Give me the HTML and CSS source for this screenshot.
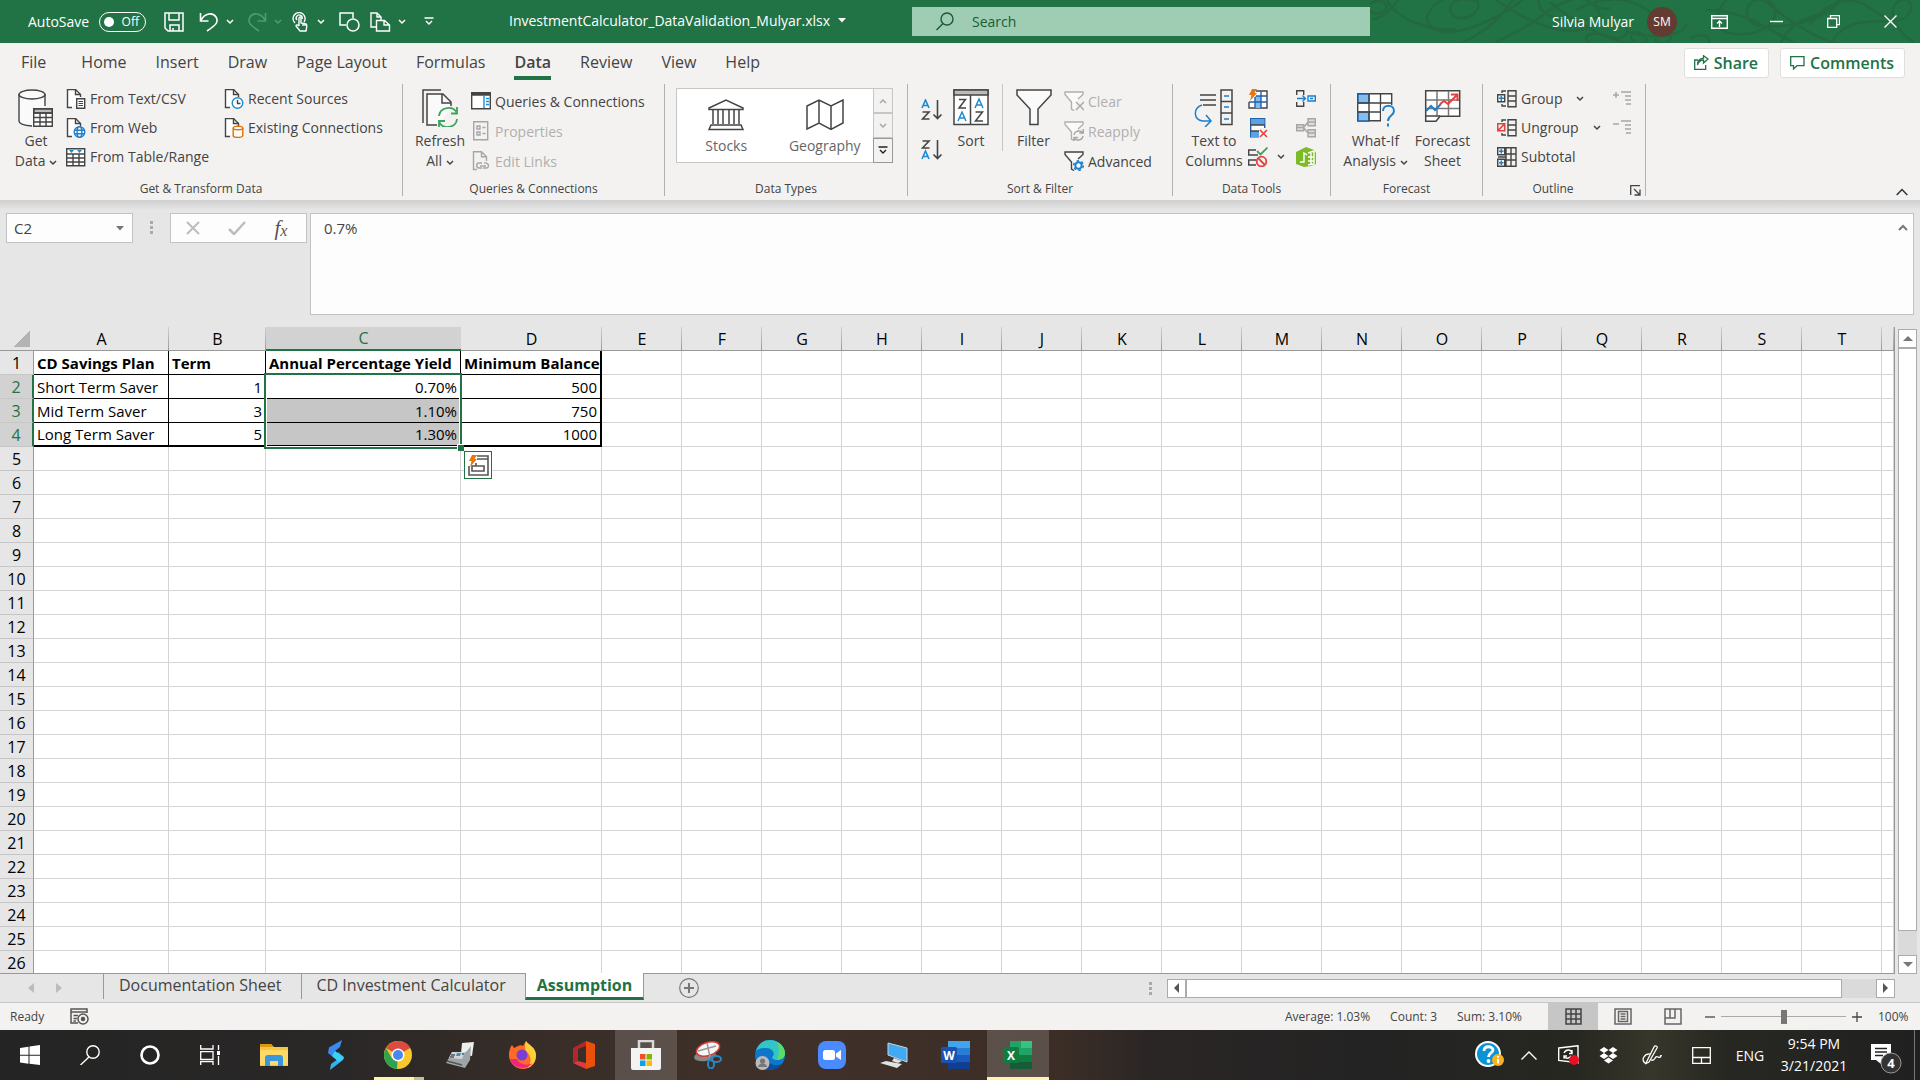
FILE: index.html
```html
<!DOCTYPE html>
<html lang="en">
<head>
  <meta charset="UTF-8" />
  <meta name="viewport" content="width=device-width, initial-scale=1.0"/>
  <title>InvestmentCalculator_DataValidation_Mulyar.xlsx</title>
  <link rel="stylesheet" href="styles.css">
</head>
<body>

  <!-- shared icon parts -->
  <svg class="defs" aria-hidden="true">
    <symbol id="chev" viewBox="0 0 8 6"><path d="M1 1l3 3 3-3" fill="none" stroke="currentColor" stroke-width="1.5"/></symbol>
    <symbol id="page" viewBox="0 0 20 20"><path d="M6 18.5H1.5v-18h8l5 5V8" fill="#fff" stroke="#444" stroke-width="1.4"/><path d="M9.5.5v5h5" fill="none" stroke="#444" stroke-width="1.4"/></symbol>
    <symbol id="funnel" viewBox="0 0 20 20"><path d="M10 19.5l-2.500-1.500v-7L1 3.500V1h18v2.500L14 8" fill="#fafafa" stroke="currentColor" stroke-width="1.4"/></symbol>
  </svg>

  <!-- TITLE BAR -->
  <header class="titlebar">
    <svg class="swirls" width="560" height="43" viewBox="0 0 560 43" fill="none" stroke="#24683f" stroke-width="2.500">
      <path d="M10 4c8-6 18-2 16 4s-12 8-16 2M26-2c8 20 40 32 70 32M12 20c16-4 20-14 30-24M118 2c-18-8-34 2-26 12s30 0 26-12-34-8-46 6 0 26 20 24 60-20 74-36M100 44c10-6 34-14 54-46M130-4c20 14 60 40 90 34s20-24 6-30-34 8-50 20-40 20-44 26M180-4c-10 24 40 30 60 20M190 2c16 14 60 44 100 44M240-2c-10 8 0 12 10 10M216 10c30-16 60-14 80 8"/>
      <path d="M230 44c-10-8 0-14 16-8s24-2 20-8M276 44c-10-8-2-16 6-10s4 12-2 8M306 44c10-8 2-16-6-10s-4 12 2 8M266 28c-2 10 60 12 60-4M330 38c14-6 22-2 18 8M370-4c-18 16-20 40 14 38s40-30 20-34-24 24-4 26 66-2 84-30M346 10c40 0 66 22 90 34M400-4c20 20 60 46 80 48M420 44c20-40 54-20 60-48M450 24c20-24 40-30 60-16s34 16 40 4-10-18-16-6 8 30 20 36M470 44c20-30 40-20 70-24"/>
    </svg>
    <div class="quick">
      <label class="autosave" for="autosave">AutoSave</label>
      <span class="toggle"><input type="checkbox" id="autosave"><span>Off</span></span>
      <button class="q-save" aria-label="Save"><svg width="20" height="20" fill="none" stroke="#fff" stroke-width="1.500"><path d="M1 1h18v18H4l-3-3zM5 1v7h10V1M6 19v-6h9v6M9 19v-3"/></svg></button>
      <button class="q-undo" aria-label="Undo"><svg width="20" height="20" fill="none" stroke="#fff" stroke-width="1.600"><path d="M1.500 1v8h8M2 8c4-7 12-8 15-3s0 8-9 14"/></svg></button>
      <button class="q-chev" aria-label="Undo list"><svg width="8" height="6"><use href="#chev"/></svg></button>
      <button class="q-redo" aria-label="Redo"><svg width="20" height="20" fill="none" stroke="#4f9b6d" stroke-width="1.600"><path d="M18.500 1v8h-8M18 8c-4-7-12-8-15-3s0 8 9 14"/></svg></button>
      <button class="q-chev dim" aria-label="Redo list"><svg width="8" height="6"><use href="#chev"/></svg></button>
      <button class="q-touch" aria-label="Touch mode"><svg width="18" height="20" fill="none" stroke="#fff" stroke-width="1.400"><path d="M3 11a6 6 0 1 1 9-1"/><path d="M5 8a3 3 0 1 1 5-1"/><path d="M7 14V6c0-1.500 2-1.500 2 0v5l5 1c1 0 1 2 0 7H8l-4-5c0-1 1-2 3 0M11 14v-3M13 14v-2"/></svg></button>
      <button class="q-chev" aria-label="Touch options"><svg width="8" height="6"><use href="#chev"/></svg></button>
      <button class="q-shapes" aria-label="Shapes"><svg width="21" height="20" fill="none" stroke="#fff" stroke-width="1.500"><path d="M7 13H1V1h13v5"/><circle cx="14" cy="13" r="6"/></svg></button>
      <button class="q-copy" aria-label="Paste special"><svg width="21" height="20" fill="none" stroke="#fff" stroke-width="1.400"><path d="M6 15H1V1h6l4 4v3M7 1v4h4M6.500 19V8.500h8l5 4.500v6zM14 9v4h5"/></svg></button>
      <button class="q-chev" aria-label="Paste options"><svg width="8" height="6"><use href="#chev"/></svg></button>
      <button class="q-more" aria-label="Customize toolbar"><svg width="10" height="9" fill="none" stroke="#fff" stroke-width="1.400"><path d="M.5 1h9M2 4l3 3 3-3"/></svg></button>
    </div>
    <button class="doc-name">InvestmentCalculator_DataValidation_Mulyar.xlsx <svg width="8" height="5"><path d="M0 0h8L4 4.500z" fill="#fff"/></svg></button>
    <div class="search">
      <svg width="18" height="19" fill="none" stroke="#185c37" stroke-width="1.400"><circle cx="11" cy="7" r="6"/><path d="M7 11.500L.5 18"/></svg>
      <input type="text" aria-label="Search" placeholder="Search">
    </div>
    <div class="window-side">
      <span>Silvia Mulyar</span>
      <span class="avatar">SM</span>
      <button aria-label="Ribbon display"><svg width="17" height="14" fill="none" stroke="#fff" stroke-width="1.400"><path d="M.7.7h15.600v12.600H.7zM1 3.500h15M8.500 12V6M6 8.500L8.500 6 11 8.500"/></svg></button>
      <button aria-label="Minimize"><svg width="13" height="13"><path d="M0 6.500h13" stroke="#fff" stroke-width="1.400"/></svg></button>
      <button aria-label="Restore"><svg width="13" height="13" fill="none" stroke="#fff" stroke-width="1.300"><path d="M.7 3.500h9v9h-9zM3.500 3.500V.7h9v9h-3"/></svg></button>
      <button aria-label="Close"><svg width="13" height="13"><path d="M.5.5l12 12M12.500.5l-12 12" stroke="#fff" stroke-width="1.400"/></svg></button>
    </div>
  </header>

  <!-- RIBBON TABS -->
  <nav class="tabs">
    <a href="#" class="file">File</a>
    <a href="#">Home</a>
    <a href="#">Insert</a>
    <a href="#">Draw</a>
    <a href="#">Page Layout</a>
    <a href="#">Formulas</a>
    <a href="#" class="active">Data</a>
    <a href="#">Review</a>
    <a href="#">View</a>
    <a href="#">Help</a>
    <div class="tab-actions">
      <button><svg width="15" height="15" fill="none" stroke="#217346" stroke-width="1.300"><path d="M4 5H.7v9.300h11V10M3.500 10c1-4 3-5 6-5V8l4.500-4L9.500.7v2.500C6 3.500 3.500 6 3.500 10z"/></svg>Share</button>
      <button><svg width="15" height="14" fill="none" stroke="#217346" stroke-width="1.300"><path d="M.7.7h13.300v9H7L3.500 13V9.700H.7z"/></svg>Comments</button>
    </div>
  </nav>

  <!-- RIBBON -->
  <section class="ribbon">
    <div class="group g-get">
      <div class="body">
        <button class="big">
          <svg width="36" height="38" fill="none" stroke="#444" stroke-width="1.400"><path d="M1 5v27c0 3 6 5 13 5h1V20h11V5" fill="#fafafa" stroke="none"/><path d="M1 5v27c0 2.500 5 4.500 13 5M27 5v12"/><ellipse cx="14" cy="5.500" rx="13" ry="4.500" fill="#fafafa"/><path d="M15.700 19.700h18.600v17.600H15.700z" fill="#fff"/><path d="M16 20h18v4H16z" fill="#bbb"/><path d="M15.700 24h18.600M15.700 28.500h18.600M15.700 33h18.600M22 24v13M28 24v13"/></svg>
          <span>Get<br>Data <svg width="8" height="6"><use href="#chev"/></svg></span>
        </button>
        <div class="list">
          <button><svg width="20" height="20"><use href="#page"/><path d="M10.700 9.700h8v9.600h-8z" fill="#fff" stroke="#444" stroke-width="1.400"/><path d="M12.500 12.500H17M12.500 14.500H17M12.500 16.500H17" stroke="#444"/></svg>From Text/CSV</button>
          <button><svg width="20" height="20"><use href="#page"/><g fill="#fff" stroke="#1e7fcb" stroke-width="1.400"><circle cx="13.500" cy="14" r="5.300"/><ellipse cx="13.500" cy="14" rx="2.400" ry="5.300"/><path d="M8.500 12.300h10M8.500 15.700h10"/></g></svg>From Web</button>
          <button><svg width="20" height="20" fill="none" stroke="#444" stroke-width="1.400"><path d="M.7 1.700h18v17H.7z" fill="#fff"/><path d="M1 7h18M1 11h18M1 15h18M7 7v12M13 7v12"/><path d="M3 3h5L5.500 6zM11 3h5l-2.500 3z" fill="#1e8bd0" stroke="none"/></svg>From Table/Range</button>
        </div>
        <div class="list">
          <button><svg width="20" height="20"><use href="#page"/><circle cx="13.500" cy="14" r="5.300" fill="#fff" stroke="#1e8bd0" stroke-width="1.400"/><path d="M13.500 11v3.500h3" fill="none" stroke="#444" stroke-width="1.400"/></svg>Recent Sources</button>
          <button><svg width="20" height="20"><use href="#page"/><g fill="#fff" stroke="#e07000" stroke-width="1.400"><path d="M9.200 10v7.500c0 2.500 9.600 2.500 9.600 0V10"/><ellipse cx="14" cy="10" rx="4.800" ry="1.800"/></g></svg>Existing Connections</button>
        </div>
      </div>
      <div class="caption">Get &amp; Transform Data</div>
    </div>

    <div class="group g-queries">
      <div class="body">
        <button class="big">
          <svg width="36" height="38" fill="none" stroke="#444" stroke-width="1.500"><path d="M6 6h14l8 8v6L17 35H6z" fill="#fafafa" stroke="none"/><path d="M1 34V1h18M15 36H5V5h16l8 8v4"/><path d="M20 5v9h9"/><g stroke="#3ba55c" stroke-width="1.800"><path d="M17 27c1-9 14-11 18-3M35 18v6.500h-6M35 30c-1 9-14 11-18 3M17 38v-6h6"/></g></svg>
          <span>Refresh<br>All <svg width="8" height="6"><use href="#chev"/></svg></span>
        </button>
        <div class="list loose">
          <button><svg width="20" height="20" fill="none" stroke="#444" stroke-width="1.400"><path d="M.7 1.700h18.600v16H.7z" fill="#fff"/><path d="M1 4h18M1 2.500h18"/><path d="M13 4v13" stroke="#1e8bd0"/><path d="M15 7.500h3M15 10.500h3M15 13.500h3" stroke="#1e8bd0"/></svg>Queries &amp; Connections</button>
          <button disabled><svg width="20" height="20" fill="none" stroke="#a6a6a6" stroke-width="1.400"><path d="M2.700.7h14v18h-14z"/><path d="M6 5h3v3H6zM6 11h3v3H6zM11.500 6.500h3M11.500 12.500h3"/></svg>Properties</button>
          <button disabled><svg width="20" height="20" fill="none" stroke="#a6a6a6" stroke-width="1.400"><path d="M6 18.500H2.500V.7h8l5 5V10M10.500.7v5h5"/><path d="M11 17H8c-3 0-3-5 0-5h3M13 12c5-1 6 5 2 5h-3M9 15h6"/></svg>Edit Links</button>
        </div>
      </div>
      <div class="caption">Queries &amp; Connections</div>
    </div>

    <div class="group g-types">
      <div class="body">
        <div class="gallery">
          <button class="tile"><svg width="36" height="32" fill="none" stroke="#444" stroke-width="1.500"><path d="M1 9L18 1l17 8v1.500H1zM5 11v14M31 11v14M10 11v14M15 11v14M21 11v14M26 11v14M3.500 26h29M1 30.500h34l-2-4.500H3z"/></svg>Stocks</button>
          <button class="tile"><svg width="38" height="32" fill="none" stroke="#444" stroke-width="1.500"><path d="M1 7l12-6 12 6 12-6v23l-12 6.500L13 24 1 30zM13 1v23M25 7v23"/></svg>Geography</button>
          <div class="gallery-scroll">
            <button disabled aria-label="Up"><svg class="flip" width="8" height="6"><use href="#chev"/></svg></button>
            <button disabled aria-label="Down"><svg width="8" height="6"><use href="#chev"/></svg></button>
            <button class="more" aria-label="More"><svg width="10" height="9" fill="none" stroke="#222" stroke-width="1.400"><path d="M.5 1h9M2 4l3 3 3-3"/></svg></button>
          </div>
        </div>
      </div>
      <div class="caption">Data Types</div>
    </div>

    <div class="group g-sort">
      <div class="body">
        <div class="az">
          <button aria-label="Sort A to Z"><svg width="22" height="22" fill="none" stroke-width="1.600"><path d="M1 9L4.500 1 8 9M2.500 6.500h4" stroke="#1e8bd0"/><path d="M1.500 13H8l-6.500 7h7M16.500 1v18M12.500 15.500l4 4 4-4" stroke="#444"/></svg></button>
          <button aria-label="Sort Z to A"><svg width="22" height="22" fill="none" stroke-width="1.600"><path d="M1 20l3.500-8L8 20M2.500 17.500h4" stroke="#1e8bd0"/><path d="M1.500 2H8L1.500 9h7M16.500 1v18M12.500 15.500l4 4 4-4" stroke="#444"/></svg></button>
        </div>
        <button class="big">
          <svg width="36" height="38" fill="none" stroke="#444" stroke-width="1.500"><path d="M1 1h34v34.500H1z" fill="#fff"/><path d="M1 1h34v5H1z" fill="#bbb"/><path d="M17.500 6v30M6 10.500h6.500L6 19h7M22.500 23h7l-7 9h7.500"/><path d="M5 32l4-9 4 9M6.500 29h5M22 19l4-9 4 9M23.500 16h5" stroke="#1e8bd0"/></svg>
          <span>Sort</span>
        </button>
        <button class="big filter">
          <svg width="36" height="38"><path d="M1 1h34v5L22 20v15.500h-8V20L1 6z" fill="#fafafa" stroke="#444" stroke-width="1.500"/></svg>
          <span>Filter</span>
        </button>
        <div class="list loose">
          <button disabled><svg width="20" height="20"><use href="#funnel"/><path d="M12 11l8 8M20 11l-8 8" stroke="#a6a6a6" stroke-width="1.400"/></svg>Clear</button>
          <button disabled><svg width="20" height="20"><use href="#funnel"/><path d="M10 14c1-5 7-5 9-2M19.300 8v4h-4M19 15c-1 5-7 5-9 2M10 20v-3.500h4" fill="none" stroke="#a6a6a6" stroke-width="1.400"/></svg>Reapply</button>
          <button><svg width="20" height="20"><use href="#funnel"/><circle cx="14.500" cy="14.500" r="3.200" fill="#fff" stroke="#1e7fcb" stroke-width="2"/><circle cx="14.500" cy="14.500" r="4.800" fill="none" stroke="#1e7fcb" stroke-width="1.500" stroke-dasharray="2.500 2.500"/></svg>Advanced</button>
        </div>
      </div>
      <div class="caption">Sort &amp; Filter</div>
    </div>

    <div class="group g-tools">
      <div class="body">
        <button class="big">
          <svg width="40" height="38" fill="none" stroke="#444" stroke-width="1.500"><path d="M6 6h16M6 11h16M9 16h13M27 1h11v34.500H27zM27 12.500h11M27 24h11"/><path d="M30 7h5M30 18h5M30 30h5M8 16c-9 3-9 15 1 16h7M12 26l5 6-6 6" stroke="#1e7fcb"/></svg>
          <span>Text to<br>Columns</span>
        </button>
        <div class="mini">
          <button aria-label="Flash Fill"><svg width="20" height="20"><path d="M8 2h11v17H1v-6" fill="#fff" stroke="#444" stroke-width="1.400"/><path d="M7 7h6v12H7z" fill="#83bdf0"/><path d="M1 13h18M8 7h11M7 8v11M13 2v17" stroke="#1e62ad" stroke-width="1.400" fill="none"/><path d="M4 0h5L6.500 4H9l-7 8 1.500-6H1z" fill="#e8760c"/></svg></button>
          <button aria-label="Remove Duplicates"><svg width="20" height="20"><path d="M2.700.7h14v18h-14z" fill="#fff" stroke="#1e62ad" stroke-width="1.400"/><path d="M3 1h13.500v6H3zM3 13h8v6H3z" fill="#5ba3e0"/><path d="M2 7h15M2 13h9" stroke="#444" stroke-width="1.400"/><path d="M11 10h9v10h-9z" fill="#f3f2f1"/><path d="M12 12l7 7M19 12l-7 7" stroke="#e8413c" stroke-width="1.600"/></svg></button>
          <button aria-label="Data Validation"><svg width="20" height="20" fill="none" stroke="#444" stroke-width="1.400"><path d="M8 3H.7v5H10M8 13H.7v5H8"/><path d="M9 4l3.500 3.500L19.500.5" stroke="#3ba55c" stroke-width="1.800"/><g stroke="#e8413c" stroke-width="1.800"><circle cx="13.500" cy="14.500" r="4.800"/><path d="M10 11l7 7"/></g></svg></button>
        </div>
        <button class="val-more" aria-label="Validation options"><svg width="8" height="6"><use href="#chev"/></svg></button>
        <div class="mini">
          <button aria-label="Consolidate"><svg width="20" height="20" fill="none" stroke="#444" stroke-width="1.400"><path d="M.7 6V1.700h7V6M.7 13v4.300h7V13"/><path d="M1 9.500h8M6.500 6.500l3 3-3 3M12 7h7.300v5H12zM14 9.500h3" stroke="#1e7fcb"/></svg></button>
          <button aria-label="Relationships" disabled><svg width="20" height="20" fill="#ddd" stroke="#a6a6a6" stroke-width="1.400"><path d="M.7 6.700h7v6h-7zM12 .7h7.300v7H12zM12 11.700h7.300v7H12zM1 9.500h6M12 4h7M12 15h7M8 9l4-5M8 10l4 5"/></svg></button>
          <button aria-label="Data Model"><svg width="20" height="20"><path d="M0 5l10-5 8 3 2 3v11l-5 2-7 1-8-3z" fill="#7cba28"/><path d="M12 6l6-2v13l-6 1M15 5v13M12 10h6M12 14h6M4 15h4V6l3 2" fill="none" stroke="#fff" stroke-width="1.400"/></svg></button>
        </div>
      </div>
      <div class="caption">Data Tools</div>
    </div>

    <div class="group g-forecast">
      <div class="body">
        <button class="big">
          <svg width="40" height="38" fill="none" stroke="#444" stroke-width="1.400"><path d="M1.700 4.700h34v27h-34z" fill="#fff"/><path d="M2 5h11v9H2zM2 23h11v9H2z" fill="#83bdf0" stroke="#1e62ad"/><path d="M2 14h34M2 23h24M13 5v27M24.500 5v27"/><path d="M25 16h15v22h-7v-5h-8z" fill="#f3f2f1" stroke="none"/><path d="M27 22c0-7 11-7 11 0 0 5-6 4-6 10M32 34.500v3" stroke="#1e7fcb" stroke-width="2"/></svg>
          <span>What-If<br>Analysis <svg width="8" height="6"><use href="#chev"/></svg></span>
        </button>
        <button class="big">
          <svg width="38" height="38" fill="none" stroke="#444" stroke-width="1.500"><path d="M1.700 1.700h34v25.600H16l-4 5H1.700z" fill="#fff"/><path d="M2 11h33M2 19.500h33M13 2v25M24.500 2v25" stroke="#777"/><path d="M2 27h14"/><path d="M2 22l5-5 4 4 6-6" stroke="#1e7fcb" stroke-width="2"/><path d="M16 15l4-3 4 3 9-9M27 5.500h6.500V12" stroke="#e8413c" stroke-width="2"/></svg>
          <span>Forecast<br>Sheet</span>
        </button>
      </div>
      <div class="caption">Forecast</div>
    </div>

    <div class="group g-outline">
      <div class="body">
        <div class="list">
          <button><svg width="20" height="20" fill="none" stroke="#444" stroke-width="1.400"><path d="M11 1.700h8v16h-8zM11 7h8M11 12h8M9 2H5v2M9 17H5v-2M.7 5.700h7v7h-7z"/><path d="M4.300 7v5M2 9.300h5" stroke="#1e7fcb"/></svg>Group<svg class="drop" width="8" height="6"><use href="#chev"/></svg></button>
          <button><svg width="20" height="20" fill="none" stroke="#444" stroke-width="1.400"><path d="M11 1.700h8v16h-8zM11 7h8M11 12h8M9 2H5v2M9 17H5v-2"/><path d="M.7 5.700h7v7h-7zM7.500 6L1 12.500" stroke="#e8413c" stroke-width="1.600"/></svg>Ungroup<svg class="drop" width="8" height="6"><use href="#chev"/></svg></button>
          <button><svg width="20" height="20" fill="none" stroke="#444" stroke-width="1.400"><path d="M9 .7h10v18.600H9zM14 1v18M9 7h10M9 13h10M.7.7h7v7h-7zM.7 12.300h7v7h-7zM1 10h8"/><path d="M4.300 2v4.500M2 4.300h4.500M4.300 13.500V18M2 15.800h4.500" stroke="#1e7fcb"/></svg>Subtotal</button>
        </div>
        <div class="mini">
          <button disabled aria-label="Show Detail"><svg width="20" height="20" stroke="#a6a6a6" stroke-width="1.500"><path d="M0 6h6M3 3v6M8 3h10M12 7h6M12 11h6M13 15h5"/></svg></button>
          <button disabled aria-label="Hide Detail"><svg width="20" height="20" stroke="#a6a6a6" stroke-width="1.500"><path d="M0 6h6M8 3h10M12 7h6M12 11h6M13 15h5"/></svg></button>
        </div>
      </div>
      <div class="caption">Outline</div>
      <button class="launcher" aria-label="Outline settings"><svg width="11" height="11" fill="none" stroke="#444" stroke-width="1.300"><path d="M.7 10V.7H10M4 4l5.500 5.500M10 4.500V10H4.500"/></svg></button>
    </div>
    <button class="collapse" aria-label="Collapse ribbon"><svg width="12" height="8" fill="none" stroke="#333" stroke-width="1.500"><path d="M.7 7L6 1.500 11.300 7"/></svg></button>
  </section>

  <!-- FORMULA BAR -->
  <section class="formula-row">
    <div class="name-box">
      <input type="text" aria-label="Name box" value="C2">
      <button aria-label="Names"><svg width="8" height="5"><path d="M0 0h8L4 4.500z" fill="#777"/></svg></button>
    </div>
    <span class="dots"><i></i><i></i><i></i></span>
    <div class="fx">
      <button aria-label="Cancel" disabled><svg width="14" height="14"><path d="M1 1l12 12M13 1L1 13" stroke="#bdbdbd" stroke-width="2"/></svg></button>
      <button aria-label="Enter" disabled><svg width="18" height="14" fill="none"><path d="M1 8l5 5L17 1" stroke="#bdbdbd" stroke-width="2.500"/></svg></button>
      <button aria-label="Insert function" class="fx-btn">f<small>x</small></button>
    </div>
    <div class="formula">
      <textarea aria-label="Formula">0.7%</textarea>
      <svg width="10" height="7" fill="none" stroke="#777" stroke-width="2"><path d="M1 6l4-4 4 4"/></svg>
    </div>
  </section>

  <!-- WORKSHEET -->
  <main class="sheet">
    <div class="grid">
      <table>
        <colgroup>
          <col class="w-row"><col class="w-a"><col class="w-b"><col class="w-c"><col class="w-d">
          <col span="16" class="w-std"><col>
        </colgroup>
        <thead><tr id="letters"></tr></thead>
        <tbody id="rows"></tbody>
      </table>
    </div>
    <div class="vscroll">
      <button aria-label="Scroll up"><svg width="10" height="5"><path d="M0 5l5-5 5 5z" fill="#777"/></svg></button>
      <div class="track"><div class="thumb"></div></div>
      <button aria-label="Scroll down"><svg width="10" height="5"><path d="M0 0h10L5 5z" fill="#777"/></svg></button>
    </div>
  </main>

  <!-- SHEET TABS -->
  <nav class="sheet-bar">
    <div class="sheet-nav">
      <button disabled aria-label="Previous"><svg width="6" height="10"><path d="M6 0v10L0 5z" fill="#bbb"/></svg></button>
      <button disabled aria-label="Next"><svg width="6" height="10"><path d="M0 0v10l6-5z" fill="#bbb"/></svg></button>
    </div>
    <a href="#" class="sheet-tab">Documentation Sheet</a>
    <a href="#" class="sheet-tab">CD Investment Calculator</a>
    <a href="#" class="sheet-tab active">Assumption</a>
    <button class="add" aria-label="New sheet"><svg width="20" height="20" fill="none" stroke="#777"><circle cx="10" cy="10" r="9.300" stroke-width="1.200"/><path d="M5 10h10M10 5v10" stroke-width="2"/></svg></button>
    <div class="hscroll">
      <span class="dots"><i></i><i></i><i></i></span>
      <button aria-label="Scroll left"><svg width="5" height="10"><path d="M5 0v10L0 5z" fill="#555"/></svg></button>
      <div class="track"><div class="thumb"></div></div>
      <button aria-label="Scroll right"><svg width="5" height="10"><path d="M0 0v10l5-5z" fill="#555"/></svg></button>
    </div>
  </nav>

  <!-- STATUS BAR -->
  <footer class="status">
    <span>Ready</span>
    <svg class="macro" width="19" height="17" fill="none" stroke="#555" stroke-width="1.500"><path d="M8 15H1V1h16v4M1 4h16M3.500 7.500H8M3.500 10.500H7M3.500 13H6"/><circle cx="13" cy="11" r="5"/><circle cx="13" cy="11" r="1.500" fill="#555"/></svg>
    <div class="stats"><span>Average: 1.03%</span><span>Count: 3</span><span>Sum: 3.10%</span></div>
    <div class="views">
      <button class="on" aria-label="Normal"><svg width="17" height="17" fill="none" stroke="#444" stroke-width="1.500"><path d="M1 1h15v15H1zM1 6h15M1 11h15M6 1v15M11 1v15"/></svg></button>
      <button aria-label="Page Layout"><svg width="18" height="17" fill="none" stroke="#666" stroke-width="1.500"><path d="M1 1h16v15H1zM4.500 3.500h9v10h-9zM6.500 6h5M6.500 8.500h5M6.500 11h5"/></svg></button>
      <button aria-label="Page Break Preview"><svg width="18" height="17" fill="none" stroke="#666" stroke-width="1.500"><path d="M1 1h16v15H1zM1 10h10V1M6 1v9"/></svg></button>
    </div>
    <div class="zoom">
      <button aria-label="Zoom out"><svg width="10" height="10"><path d="M0 5h10" stroke="#444" stroke-width="1.300"/></svg></button>
      <input type="range" aria-label="Zoom" min="0" max="200" value="100">
      <button aria-label="Zoom in"><svg width="10" height="10"><path d="M0 5h10M5 0v10" stroke="#444" stroke-width="1.300"/></svg></button>
      <span>100%</span>
    </div>
  </footer>

  <!-- TASKBAR -->
  <footer class="taskbar">
    <button class="sys" aria-label="Start"><svg width="20" height="20" fill="#fff"><path d="M0 3l8.500-1.300v8H0zM9.500 1.500L20 0v9.700H9.500zM0 10.700h8.500v8L0 17.500zM9.500 10.700H20V20L9.500 18.700z"/></svg></button>
    <button class="sys" aria-label="Search"><svg width="20" height="20" fill="none" stroke="#fff" stroke-width="1.400"><circle cx="13" cy="7" r="6.200"/><path d="M9 12l-8.500 8"/></svg></button>
    <button class="sys" aria-label="Cortana"><svg width="20" height="20" fill="none"><circle cx="10" cy="10" r="8.500" stroke="#fff" stroke-width="2.600"/></svg></button>
    <button class="sys" aria-label="Task View"><svg width="20" height="20" fill="none" stroke="#fff" stroke-width="1.300"><path d="M.7 0v4H13V0M.7 6.700H13v7.600H.7zM.7 20v-3.500H13V20M18.500 0v5M18.500 11v9"/><path d="M18.500 6v4" stroke-width="3"/></svg></button>
    <div class="apps">
      <button aria-label="File Explorer"><svg width="28" height="24"><path d="M0 1h11l3 3h14v19H0z" fill="#f8c63d"/><path d="M0 1h11l2 3H0z" fill="#d99a12"/><path d="M0 7h28v15H0z" fill="#ffd968"/><path d="M5 23v-8c0-2 1-3 3-3h12c2 0 3 1 3 3v8h-5v-5h-8v5z" fill="#3a96dd"/></svg></button>
      <button aria-label="Shortcut"><svg width="18" height="30"><path d="M15 0L2 7.500 1 13l10 8 6-3-9-7 5-4z" fill="#3a8bf0"/><path d="M3 30l13-10 1-3-6-5-3 4 3 3-7 5z" fill="#2fb4f0"/><path d="M8 11l9 7-5 4-7-6z" fill="#3fd0f5"/></svg></button>
      <button class="running" aria-label="Chrome"><svg width="28" height="28"><circle cx="14" cy="14" r="14" fill="#f9c62b"/><path d="M14 14L1.900 7A14 14 0 0 1 26.100 7z" fill="#dd4b3e"/><path d="M14 0a14 14 0 0 1 12.100 7H14z" fill="#dd4b3e"/><path d="M1.900 7L8 17.500l5.500 3L13 28A14 14 0 0 1 1.900 7z" fill="#2da252"/><circle cx="14" cy="14" r="6.500" fill="#fff"/><circle cx="14" cy="14" r="5" fill="#4a86ee"/></svg></button>
      <button aria-label="Scanner"><svg width="28" height="26"><path d="M16 1l12-1-2 14-11-2z" fill="#eceff0"/><path d="M6 10h14l5-6-1 14-5 8-19-5 4-7z" fill="#9ea4a8"/><path d="M6 10h13l-3 7-13-1z" fill="#cfd5d8"/><path d="M11 11h4l-1 3h-4z" fill="#3f8fc4"/><path d="M5 13h4M4 15h4M16 12h2M1 19l15 4" stroke="#555" stroke-width="1.300"/></svg></button>
      <button aria-label="Firefox"><svg width="28" height="28"><path d="M15 28A14 14 0 0 1 1 14c0-5 2-9 3-10l2 3 4-2c2-1 4-1 5 0l3-5c2 3 10 7 10 15 0 8-6 13-13 13z" fill="#ff6a28"/><path d="M18 0c2 4 10 6 10 14 0 7-4 11-8 13 4-6 3-12-1-16-3-3-2-8-1-11z" fill="#ffcf3a"/><path d="M2 18c2 8 14 13 23 4-5 3-14 2-16-4z" fill="#f0257d"/><circle cx="14" cy="14" r="5.500" fill="#7a3fd0"/></svg></button>
      <button aria-label="Office"><svg width="24" height="28"><path d="M1 7L14 0v5L6 8v12l-5 2z" fill="#b4252d"/><path d="M1 22l5-2 8 2v6z" fill="#e03a3e"/><path d="M14 0l9 3v22l-9 3z" fill="#ea4f0c"/></svg></button>
      <button class="lit" aria-label="Microsoft Store"><svg width="30" height="30"><path d="M8 9V1h14v8" fill="none" stroke="#d8d8d8" stroke-width="2.500"/><path d="M0 8h30v20q0 2-2 2H2q-2 0-2-2z" fill="#f3f3f3"/><path d="M9 14h5.500v5.500H9z" fill="#f25022"/><path d="M15.500 14H21v5.500h-5.500z" fill="#7fba00"/><path d="M9 20.500h5.500V26H9z" fill="#00a4ef"/><path d="M15.500 20.500H21V26h-5.500z" fill="#ffb900"/></svg></button>
      <button aria-label="Snipping Tool"><svg width="28" height="28"><ellipse cx="11" cy="15" rx="11" ry="5" fill="#888" transform="rotate(-10 11 15)"/><ellipse cx="14" cy="8" rx="12" ry="6.500" fill="#f6f6f6" stroke="#d53a33" stroke-width="1.500" transform="rotate(-18 14 8)"/><path d="M13 2l3 14M4 10l18-5" stroke="#999" stroke-width="1.500"/><g fill="none" stroke="#2389c9" stroke-width="2"><ellipse cx="22" cy="18" rx="5" ry="3"/><ellipse cx="17" cy="23" rx="3" ry="4.500"/></g></svg></button>
      <button aria-label="Edge"><svg width="30" height="30"><circle cx="15" cy="15" r="15" fill="#0c77cc"/><path d="M1 11C3 4 8 0 15 0c9 0 15 7 15 13 0 5-4 7-8 7s-6-2-4-4 0-8-7-8c-5 0-8 1-10 3z" fill="#33c6c6"/><path d="M22 2c6 3 8 8 8 11 0 5-4 7-8 7 2-5 3-11 0-18z" fill="#5bdc6a"/><path d="M12 17c0 7 8 10 15 7-4 6-12 7-17 5z" fill="#0b4f9c"/><circle cx="7.500" cy="23" r="7" fill="#bbb"/><circle cx="7.500" cy="21" r="2.600" fill="#777"/><path d="M3 27c1-5 8-5 9 0z" fill="#777"/></svg></button>
      <button aria-label="Zoom"><svg width="28" height="28"><rect width="28" height="28" rx="8" fill="#4a8cff"/><rect x="5" y="9" width="12" height="10" rx="2.500" fill="#fff"/><path d="M18 12.500L23 9v10l-5-3.500z" fill="#fff"/></svg></button>
      <button aria-label="Remote PC"><svg width="28" height="26"><path d="M8 1l19 5v14L8 13z" fill="#41aaf4" stroke="#c9d4dc"/><path d="M14 16l8 3-4 2-6-2zM0 21l6-2 16 3-5 4z" fill="#dfe3e6"/></svg></button>
      <button aria-label="Word"><svg width="30" height="28"><path d="M7 0h22v7H7z" fill="#41a5ee"/><path d="M7 7h22v7H7z" fill="#2b7cd3"/><path d="M7 14h22v7H7z" fill="#185abd"/><path d="M7 21h22v7H7z" fill="#103f91"/><rect y="6" width="16" height="16" rx="1.500" fill="#1b52b0"/><text x="8" y="18.500" class="badge-letter">W</text></svg></button>
      <button class="lit open" aria-label="Excel"><svg width="30" height="28"><path d="M7 0h22v28H7z" fill="#21a366"/><path d="M18 0h11v7H18z" fill="#33c481"/><path d="M7 14h22v7H7z" fill="#107c41"/><path d="M7 21h22v7H7z" fill="#185c37"/><rect y="6" width="16" height="16" rx="1.500" fill="#107c41"/><text x="8" y="18.500" class="badge-letter">X</text></svg></button>
    </div>
    <div class="tray">
      <button class="help" aria-label="Get help"><svg width="30" height="28"><circle cx="13" cy="13" r="13" fill="#fff"/><circle cx="13" cy="13" r="11" fill="#0a94d6"/><path d="M9 10c0-6 9-5 9-1 0 3-4.500 3-4.500 7" fill="none" stroke="#fff" stroke-width="2.800"/><circle cx="13.500" cy="20" r="1.900" fill="#fff"/><circle cx="23" cy="19" r="6" fill="#f9b021"/><path d="M23 18v4.500M23 15v1.700" stroke="#fff" stroke-width="2"/></svg></button>
      <button class="up" aria-label="Hidden icons"><svg width="16" height="9" fill="none" stroke="#fff" stroke-width="1.400"><path d="M.5 8.500L8 1l7.500 7.500"/></svg></button>
      <button class="sync" aria-label="Updates"><svg width="22" height="20" fill="none" stroke="#fff" stroke-width="1.400"><path d="M.7 3L20 .7v17L.7 15.500z"/><path d="M6 8c2-4 7-4 8 0M14 5v3.500h-3M13 11c-2 3-6 3-7 0M6 13.500V11h3"/><circle cx="16" cy="15" r="5" fill="#e81123" stroke="none"/></svg></button>
      <button class="dropbox" aria-label="Dropbox"><svg width="19" height="17" fill="#fff"><path d="M5 0l4.500 3L5 6 .5 3zM14 0l4.500 3L14 6 9.500 3zM5 6l4.500 3L5 12 .5 9zM14 6l4.500 3L14 12 9.500 9zM9.500 10.500L14 13.500l-4.500 3-4.500-3z"/></svg></button>
      <button class="pen" aria-label="Ink"><svg width="20" height="20" fill="none" stroke="#fff" stroke-width="1.300"><path d="M4 18L12 2c1-2 4-1 3 1L7 17l-4 2zM9 9c-7-1-10 6-6 9M9 15c5 2 3-5 7-3s1-3 4-1"/></svg></button>
      <button class="pad" aria-label="Touchpad"><svg width="19" height="17" fill="none" stroke="#fff" stroke-width="1.300"><path d="M.7.7h17.600v15.600H.7zM.7 10.500h17.600M9.500 10.500V16"/></svg></button>
      <button class="lang">ENG</button>
      <button class="clock">9:54 PM<br>3/21/2021</button>
      <button class="notes" aria-label="Notifications"><svg width="31" height="31"><path d="M0 1h20v16H10v4l-5-4H0z" fill="#fff"/><path d="M4 5.500h12M4 9h12M4 12.500h8" stroke="#222" stroke-width="1.300"/><circle cx="20" cy="20" r="10" fill="#333" stroke="#999"/><text x="20" y="25" class="note-count">4</text></svg></button>
      <span class="peek"></span>
    </div>
  </footer>

  <script>
    const letters = ["", ..."ABCDEFGHIJKLMNOPQRST", ""];
    const data = [
      ["CD Savings Plan", "Term", "Annual Percentage Yield", "Minimum Balance"],
      ["Short Term Saver", "1", "0.70%", "500"],
      ["Mid Term Saver", "3", "1.10%", "750"],
      ["Long Term Saver", "5", "1.30%", "1000"]
    ];

    document.getElementById("letters").innerHTML = letters.map((l, i) =>
      `<th class="${i === 0 ? "corner" : l === "C" ? "picked" : ""}">${l}</th>`).join("");

    const overlay = `<div class="selection"><span class="handle"></span>
      <button class="quick-analysis" aria-label="Quick analysis"><svg width="21" height="23" fill="none" stroke="#555" stroke-width="1.600"><path d="M9 2h11v19H1v-9M9 5h11M4 17h12v-5H4zM8 12V9"/><path d="M4 1h5L6.500 5H9l-7 8 1.500-6H1z" fill="#e8760c" stroke="none"/></svg></button></div>`;

    let html = "";
    for (let r = 1; r <= 26; r++) {
      const picked = r >= 2 && r <= 4;
      html += `<tr><th class="${picked ? "picked" : ""}">${r}</th>`;
      for (let c = 0; c < 21; c++) {
        const cls = [];
        if (r <= 4 && c <= 3) {
          cls.push("boxed");
          if (r === 1) cls.push("head");
          else if (c > 0) cls.push("num");
          if (r === 4) cls.push("last-row");
          if (c === 3) cls.push("last-col");
          if (c === 2 && r > 2) cls.push("shade");
        }
        const text = cls.length ? data[r - 1][c] : "";
        html += `<td class="${cls.join(" ")}">${text}${r === 2 && c === 2 ? overlay : ""}</td>`;
      }
      html += "</tr>";
    }
    document.getElementById("rows").innerHTML = html;
  </script>

</body>
</html>
```
FILE: styles.css
```css
* { margin: 0; padding: 0; box-sizing: border-box; }
body {
  font-family: "Segoe UI", "Open Sans", "Noto Sans", sans-serif;
  font-size: 14px;
  color: #444;
  background: #e6e6e6;
  height: 100vh;
  display: flex;
  flex-direction: column;
  overflow: hidden;
}
button, input, textarea {
  font: inherit;
  color: inherit;
  border: none;
  background: none;
}
button { display: flex; align-items: center; justify-content: center; }
a { color: inherit; text-decoration: none; }
svg { flex: none; }
.defs { position: absolute; width: 0; height: 0; }

/* title bar */
.titlebar {
  position: relative;
  height: 43px;
  flex: none;
  display: flex;
  align-items: center;
  background: #217346;
  color: #fff;
}
.swirls { position: absolute; right: 0; top: 0; }
.quick { width: 509px; padding-left: 28px; display: flex; align-items: center; }
.autosave { width: 71px; }
.toggle {
  width: 47px;
  height: 20px;
  border: 1px solid #fff;
  border-radius: 10px;
  display: flex;
  align-items: center;
  justify-content: space-between;
  padding: 0 6px 0 4px;
  font-size: 12px;
}
.toggle input { appearance: none; width: 10px; height: 10px; border-radius: 50%; background: #fff; }
.q-save { margin-left: 18px; }
.q-undo { margin-left: 15px; }
.q-chev { width: 12px; margin-left: 5px; }
.q-chev.dim { color: #4f9b6d; }
.q-redo { margin-left: 11px; }
.q-touch { margin-left: 8px; }
.q-shapes { margin-left: 12px; }
.q-copy { margin-left: 10px; }
.q-more { margin-left: 16px; }
.doc-name { font-size: 14px; gap: 8px; padding-bottom: 2px; }
.search {
  position: absolute;
  left: 912px;
  top: 7px;
  width: 458px;
  height: 29px;
  display: flex;
  align-items: center;
  background: #9fcdb3;
  padding-left: 24px;
  gap: 18px;
}
.search input { flex: 1; }
.search input::placeholder { color: #185c37; opacity: 1; }
.window-side { position: relative; margin-left: auto; display: flex; align-items: center; padding-right: 1px; }
.avatar {
  width: 30px;
  height: 30px;
  border-radius: 50%;
  background: #633b31;
  display: flex;
  align-items: center;
  justify-content: center;
  font-size: 12px;
  margin: 0 14px 0 13px;
}
.window-side button { width: 57px; }

/* ribbon tabs */
.tabs {
  height: 39px;
  flex: none;
  display: flex;
  align-items: center;
  gap: 29px;
  padding: 0 15px 0 21px;
  background: #f3f2f1;
  font-size: 16px;
}
.tabs .file { margin-right: 6px; }
.tabs a { height: 30px; line-height: 28px; }
.tabs .active { font-weight: 600; border-bottom: 4px solid #217346; height: 34px; padding-top: 2px; }
.tab-actions { margin-left: auto; display: flex; gap: 11px; }
.tab-actions button {
  height: 30px;
  padding: 0 10px 0 9px;
  gap: 5px;
  border: 1px solid #e1dfdd;
  border-radius: 3px;
  background: #fff;
  color: #217346;
  font-weight: 600;
}

/* ribbon */
.ribbon { position: relative; height: 118px; flex: none; display: flex; background: #f3f2f1; }
.group {
  position: relative;
  height: 112px;
  margin-top: 2px;
  border-right: 1px solid #b3b0ad;
  display: flex;
  flex-direction: column;
}
.body { flex: 1; min-height: 0; display: flex; align-items: flex-start; }
.caption { flex: none; text-align: center; font-size: 12px; line-height: 14px; }
.big { flex-direction: column; padding-top: 5px; line-height: 20px; text-align: center; white-space: nowrap; }
.big > svg { margin-bottom: 4px; }
.list { display: flex; flex-direction: column; }
.list button { height: 29px; gap: 4px; justify-content: flex-start; white-space: nowrap; }
.list button:disabled { color: #b1afad; }
.loose { padding-top: 2px; }
.loose button { height: 30px; }
.mini button { width: 20px; height: 29px; }
.drop { margin-left: 10px; }
.g-get { width: 403px; }
.g-get .body { padding-left: 6px; }
.g-get .big { width: 60px; }
.g-get .list { width: 158px; }
.g-queries { width: 262px; }
.g-queries .body { padding-left: 6px; }
.g-queries .big { width: 62px; }
.g-types { width: 243px; }
.g-types .body { padding: 4px 14px 0 11px; }
.gallery { flex: 1; height: 75px; display: flex; border: 1px solid #c8c6c4; background: #fff; }
.tile { flex: 1; flex-direction: column; gap: 5px; padding-top: 3px; color: #666; }
.gallery-scroll { width: 20px; display: flex; flex-direction: column; margin: -1px; }
.gallery-scroll button { height: 25px; border: 1px solid #c8c6c4; background: #f3f2f1; color: #a6a6a6; }
.gallery-scroll .more { border-color: #999; }
.flip { rotate: 180deg; }
.g-sort { width: 265px; }
.g-sort .body { padding-left: 13px; }
.az { display: flex; flex-direction: column; gap: 18px; padding-top: 15px; }
.g-sort .big { width: 56px; }
.g-sort .filter { width: 62px; margin-left: 3px; border-left: 1px solid #c8c6c4; }
.g-tools { width: 158px; }
.g-tools .body { padding-left: 7px; }
.g-tools .big { width: 68px; }
.val-more { width: 22px; height: 29px; margin: 58px 4px 0 2px; }
.g-forecast { width: 152px; }
.g-forecast .body { padding-left: 11px; }
.g-forecast .big { width: 67px; }
.g-outline { width: 163px; }
.g-outline .caption { padding-right: 22px; }
.g-outline .body { padding-left: 14px; }
.g-outline .list { width: 116px; }
.launcher { position: absolute; right: 4px; bottom: 0; }
.collapse { position: absolute; right: 12px; bottom: 4px; }

/* formula bar */
.formula-row {
  flex: none;
  display: flex;
  align-items: flex-start;
  padding: 13px 6px 12px;
  background: linear-gradient(#cfcfcf, #e6e6e6 10px);
}
.name-box, .fx, .formula { background: #fdfdfd; border: 1px solid #c3c3c3; }
.name-box { width: 127px; height: 30px; display: flex; font-size: 15px; }
.name-box input { width: 102px; padding-left: 7px; }
.name-box button { width: 22px; }
.dots { display: flex; flex-direction: column; gap: 2px; }
.dots i { width: 3px; height: 3px; background: #aaa; }
.formula-row .dots { margin: 8px 17px 0 17px; }
.fx { width: 137px; height: 30px; display: flex; padding-right: 3px; }
.fx button { flex: 1; }
.fx-btn { font: italic 21px/1 "Liberation Serif", serif; color: #555; }
.fx-btn small { font-size: 16px; padding-top: 5px; }
.formula { flex: 1; height: 102px; margin-left: 3px; display: flex; padding: 4px 5px 0 13px; }
.formula textarea { flex: 1; resize: none; font-size: 15px; line-height: 20px; }
.formula svg { margin-top: 6px; }

/* worksheet */
.sheet { flex: 1; min-height: 0; display: flex; }
.grid {
  flex: 1;
  overflow: hidden;
  border-bottom: 1px solid #999;
  border-right: 1px solid #999;
}
.grid table { width: 100%; table-layout: fixed; border-spacing: 0; font-size: 15px; color: #000; }
.w-row { width: 34px; }
.w-a { width: 135px; }
.w-b { width: 97px; }
.w-c { width: 195px; }
.w-d { width: 141px; }
.w-std { width: 80px; }
.grid th, .grid td { height: 24px; line-height: 22px; white-space: nowrap; }
.grid th { font-weight: 400; font-size: 16px; background: #e6e6e6; }
thead th {
  border-bottom: 1px solid #999;
}
.grid thead th { background: linear-gradient(#d0d0d0, #999) right / 1px 100% no-repeat #e6e6e6; }
.grid thead .picked { background: #d2d2d2; color: #217346; border-bottom: 2px solid #217346; }
.grid thead .corner { background: linear-gradient(135deg, #e6e6e6 50%, #b3b3b3 50%) 14px 4px / 16px 16px no-repeat #e6e6e6; }
tbody th { border-right: 1px solid #999; border-bottom: 1px solid #c6c6c6; }
.grid tbody .picked { background: #d2d2d2; color: #217346; border-right: 2px solid #217346; }
.grid td { background: #fff; border-right: 1px solid #d4d4d4; border-bottom: 1px solid #d4d4d4; padding: 0 3px; }
.grid td.boxed { position: relative; border-color: #000; }
.grid td.head { font-weight: 700; }
.grid td.num { text-align: right; }
.grid td.last-row { border-bottom-width: 2px; }
.grid td.last-col { border-right-width: 2px; }
.grid td.shade { background: #c6c6c6; }
.selection {
  position: absolute;
  z-index: 1;
  top: -2px;
  left: -2px;
  right: -2px;
  height: 76px;
  border: 2px solid #217346;
  box-shadow: inset 0 0 0 1px #fff;
}
.handle { position: absolute; right: -4px; bottom: -4px; width: 7px; height: 7px; background: #217346; border: 1px solid #fff; border-width: 1px 0 0 1px; }
.quick-analysis { position: absolute; left: 198px; top: 76px; width: 28px; height: 28px; border: 1px solid #217346; background: #fff; }

/* scrollbars */
.vscroll { width: 25px; padding: 2px 3px 0; display: flex; flex-direction: column; }
.vscroll button, .hscroll button { width: 19px; height: 19px; border: 1px solid #ababab; background: #fff; }
.track { flex: 1; background: #dadada; }
.thumb { background: #fff; border: 1px solid #ababab; }
.vscroll .thumb { height: 96%; }

/* sheet tabs */
.sheet-bar { height: 29px; flex: none; display: flex; border-bottom: 1px solid #c6c6c6; font-size: 16px; }
.sheet-nav { width: 103px; display: flex; gap: 22px; padding-left: 28px; }
.sheet-tab { height: 25px; line-height: 22px; padding: 0 19px 0 15px; border-left: 1px solid #999; }
.sheet-tab.active {
  background: #fff;
  color: #217346;
  font-weight: 700;
  border-right: 1px solid #999;
  border-bottom: 3px solid #217346;
  padding: 1px 11px 0;
  margin-top: -1px;
  height: 27px;
}
.add { margin-left: 35px; }
.hscroll { width: 771px; margin-left: auto; padding-right: 25px; display: flex; align-items: center; }
.hscroll .dots { margin-right: 15px; }
.hscroll .track { height: 19px; }
.hscroll .thumb { height: 19px; width: 95%; }

/* status bar */
.status { height: 27px; flex: none; display: flex; align-items: center; background: #f3f2f1; font-size: 12px; padding-left: 10px; }
.macro { margin-left: 26px; }
.stats { margin-left: auto; display: flex; gap: 20px; margin-right: 26px; }
.views { display: flex; height: 27px; }
.views button { width: 50px; }
.views .on { background: #c6c6c6; }
.zoom { width: 222px; display: flex; align-items: center; padding-left: 7px; }
.zoom input { appearance: none; width: 125px; height: 14px; margin: 0 6px; background: linear-gradient(#aaa, #aaa) center / 100% 1px no-repeat; }
.zoom input::-webkit-slider-thumb { appearance: none; width: 6px; height: 14px; background: #777; }
.zoom span { margin-left: 16px; }

/* taskbar */
.taskbar {
  height: 50px;
  flex: none;
  display: flex;
  color: #fff;
  background: linear-gradient(90deg, #242424, #2a2827 18%, #3a2e28 30%, #3f3129 42%, #3c2e27 55%, #2a2625 60%, #232323 72%, #272721 82%, #36362a 86%, #272722 90%, #202020);
}
.sys { width: 60px; }
.apps { display: flex; margin-left: 3px; }
.apps button { width: 62px; }
.apps .lit { background: rgba(255, 255, 255, 0.16); }
.apps .open { border-bottom: 3px solid #fff3a8; padding-top: 3px; }
.running { background: linear-gradient(90deg, #fff3a8 40px, #c8c08a 40px) 7px 47px / 50px 3px no-repeat; }
.badge-letter, .note-count { font-size: 12px; font-weight: 700; text-anchor: middle; fill: #fff; }
.note-count { font-size: 13px; }
.tray { margin-left: auto; display: flex; padding-right: 5px; }
.help { width: 38px; }
.up { width: 40px; }
.sync { width: 40px; }
.dropbox { width: 38px; }
.pen { width: 50px; }
.pad { width: 48px; }
.lang { width: 50px; }
.clock { width: 78px; line-height: 22px; }
.notes { width: 57px; padding: 6px 0 0 10px; }
.peek { width: 1px; background: #777; margin-left: 4px; }
```
